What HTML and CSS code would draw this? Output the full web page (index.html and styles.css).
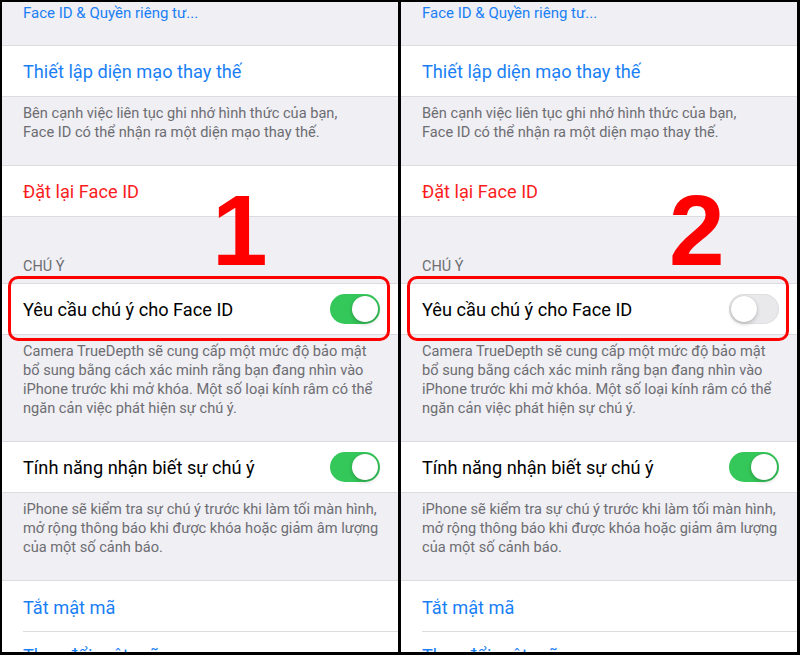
FILE: index.html
```html
<!DOCTYPE html>
<html lang="vi">
<head>
<meta charset="utf-8">
<title>Face ID - Chú ý</title>
<link rel="stylesheet" href="styles.css">
</head>
<body>
<div class="frame">
  <section class="panel">
    <div class="top"><span class="link small">Face ID &amp; Quyền riêng tư...</span></div>
    <div class="group"><div class="cell link">Thiết lập diện mạo thay thế</div></div>
    <p class="footer">Bên cạnh việc liên tục ghi nhớ hình thức của bạn,<br>Face ID có thể nhận ra một diện mạo thay thế.</p>
    <div class="group"><div class="cell danger">Đặt lại Face ID</div></div>
    <div class="header">CHÚ Ý</div>
    <div class="group marked">
      <div class="cell">Yêu cầu chú ý cho Face ID<span class="switch on"><span class="knob"></span></span></div>
      <div class="mark"></div>
    </div>
    <p class="footer">Camera TrueDepth sẽ cung cấp một mức độ bảo mật<br>bổ sung bằng cách xác minh rằng bạn đang nhìn vào<br>iPhone trước khi mở khóa. Một số loại kính râm có thể<br>ngăn cản việc phát hiện sự chú ý.</p>
    <div class="group"><div class="cell">Tính năng nhận biết sự chú ý<span class="switch on"><span class="knob"></span></span></div></div>
    <p class="footer">iPhone sẽ kiểm tra sự chú ý trước khi làm tối màn hình,<br>mở rộng thông báo khi được khóa hoặc giảm âm lượng<br>của một số cảnh báo.</p>
    <div class="group">
      <div class="cell link inset">Tắt mật mã</div>
      <div class="cell link last">Thay đổi mật mã</div>
    </div>
    <div class="num one">1</div>
  </section>
  <section class="panel">
    <div class="top"><span class="link small">Face ID &amp; Quyền riêng tư...</span></div>
    <div class="group"><div class="cell link">Thiết lập diện mạo thay thế</div></div>
    <p class="footer">Bên cạnh việc liên tục ghi nhớ hình thức của bạn,<br>Face ID có thể nhận ra một diện mạo thay thế.</p>
    <div class="group"><div class="cell danger">Đặt lại Face ID</div></div>
    <div class="header">CHÚ Ý</div>
    <div class="group marked">
      <div class="cell">Yêu cầu chú ý cho Face ID<span class="switch off"><span class="knob"></span></span></div>
      <div class="mark"></div>
    </div>
    <p class="footer">Camera TrueDepth sẽ cung cấp một mức độ bảo mật<br>bổ sung bằng cách xác minh rằng bạn đang nhìn vào<br>iPhone trước khi mở khóa. Một số loại kính râm có thể<br>ngăn cản việc phát hiện sự chú ý.</p>
    <div class="group"><div class="cell">Tính năng nhận biết sự chú ý<span class="switch on"><span class="knob"></span></span></div></div>
    <p class="footer">iPhone sẽ kiểm tra sự chú ý trước khi làm tối màn hình,<br>mở rộng thông báo khi được khóa hoặc giảm âm lượng<br>của một số cảnh báo.</p>
    <div class="group">
      <div class="cell link inset">Tắt mật mã</div>
      <div class="cell link last">Thay đổi mật mã</div>
    </div>
    <div class="num two">2</div>
  </section>
</div>
</body>
</html>
```

FILE: styles.css
```css
* { box-sizing: border-box; }
html, body { margin: 0; padding: 0; background: #000; }
body { width: 800px; height: 655px; overflow: hidden; font-family: "Roboto", "Noto Sans", sans-serif; }
.frame {
  display: flex;
  gap: 3px;
  padding: 2px 3px 3px 2px;
  height: 655px;
}
.panel {
  position: relative;
  width: 396px;
  height: 650px;
  overflow: hidden;
  background: #efeff4;
}
.top { height: 43px; padding: 1px 0 0 21px; }
.small { font-size: 15px; line-height: 18px; }
.link { color: #1a7ff5; }
.danger { color: #fb1d1d; }
.group {
  background: #fff;
  border-top: 1px solid #dcdce0;
  border-bottom: 1px solid #dcdce0;
}
.cell {
  height: 50px;
  display: flex;
  align-items: center;
  justify-content: space-between;
  padding: 0 18px 0 21px;
  font-size: 18.2px;
  color: #000;
}
.cell.link { color: #1a7ff5; }
.cell.danger { color: #fb1d1d; }
.cell.inset { border-bottom: 1px solid #dcdce0; margin-left: 21px; padding-left: 0; height: 51px; padding-top: 2px; }
.cell.last { align-items: flex-start; padding-top: 13px; }
.footer {
  margin: 0;
  padding: 7px 10px 23px 21px;
  font-size: 14.6px;
  line-height: 19px;
  color: #6d6d72;
  white-space: nowrap;
}
.header {
  padding: 42px 21px 8px;
  font-size: 14.5px;
  line-height: 16px;
  color: #6d6d72;
}
.marked { position: relative; }
.mark {
  position: absolute;
  left: 6px;
  right: 8px;
  top: -8px;
  bottom: -7px;
  border: 3px solid #ff0000;
  border-radius: 10px;
}
.switch {
  width: 50px;
  height: 30px;
  border-radius: 15px;
  display: flex;
  align-items: center;
  padding: 2px;
  flex: none;
}
.switch.on { background: #34c759; justify-content: flex-end; }
.switch.off { background: #e9e9eb; justify-content: flex-start; box-shadow: inset 0 0 0 1px #e0e0e3; }
.knob {
  width: 26px;
  height: 26px;
  border-radius: 50%;
  background: #fff;
  box-shadow: 0 2px 4px rgba(0,0,0,0.2), 0 0 1px rgba(0,0,0,0.2);
}
.num {
  position: absolute;
  top: 178px;
  font-family: "Liberation Sans", Arial, sans-serif;
  font-weight: bold;
  font-size: 100px;
  line-height: 100px;
  color: #ff0000;
}
.num.one { left: 210px; }
.num.two { left: 268px; }
```
